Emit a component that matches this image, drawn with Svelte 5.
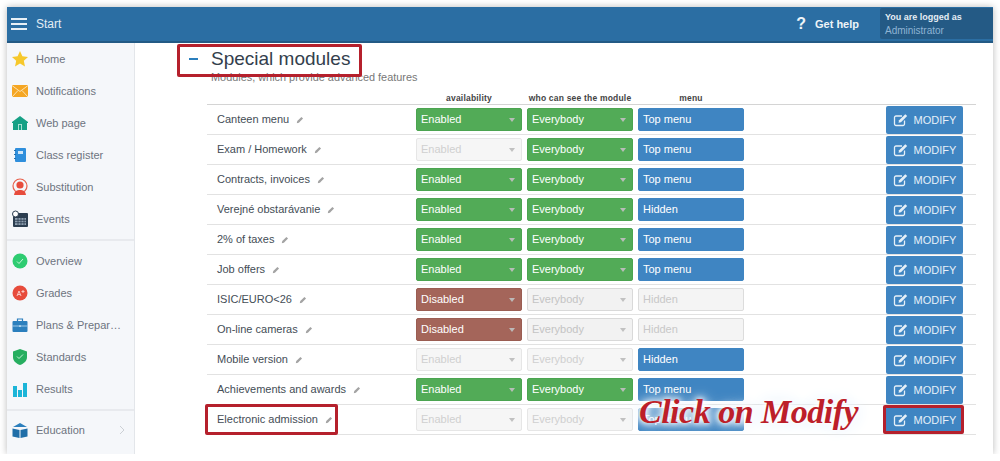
<script>
  const topNav = [
    { label: 'Home', icon: 'star' },
    { label: 'Notifications', icon: 'mail' },
    { label: 'Web page', icon: 'house' },
    { label: 'Class register', icon: 'book' },
    { label: 'Substitution', icon: 'person' },
    { label: 'Events', icon: 'calendar' }
  ];
  const midNav = [
    { label: 'Overview', icon: 'check' },
    { label: 'Grades', icon: 'grade' },
    { label: 'Plans & Prepar…', icon: 'case' },
    { label: 'Standards', icon: 'shield' },
    { label: 'Results', icon: 'bars' }
  ];

  // a: availability, w: who can see, m: menu, mo: menu greyed out
  const rows = [
    { name: 'Canteen menu', a: 'on', w: 'on', m: 'Top menu' },
    { name: 'Exam / Homework', a: 'off', w: 'on', m: 'Top menu' },
    { name: 'Contracts, invoices', a: 'on', w: 'on', m: 'Top menu' },
    { name: 'Verejné obstarávanie', a: 'on', w: 'on', m: 'Hidden' },
    { name: '2% of taxes', a: 'on', w: 'on', m: 'Top menu' },
    { name: 'Job offers', a: 'on', w: 'on', m: 'Top menu' },
    { name: 'ISIC/EURO<26', a: 'dis', w: 'grey', m: 'Hidden', mo: true },
    { name: 'On-line cameras', a: 'dis', w: 'grey', m: 'Hidden', mo: true },
    { name: 'Mobile version', a: 'off', w: 'off', m: 'Hidden' },
    { name: 'Achievements and awards', a: 'on', w: 'on', m: 'Top menu' },
    { name: 'Electronic admission', a: 'off', w: 'off', m: 'Top menu' }
  ];
  const availText = { on: 'Enabled', off: 'Enabled', dis: 'Disabled' };
</script>

{#snippet navIcon(name)}
  <svg class="nav-icon" viewBox="0 0 18 18" aria-hidden="true">
    {#if name === 'star'}
      <path d="M9 1l2.400 5.300 5.600.6-4.200 3.800 1.200 5.700L9 13.500l-5 2.900 1.200-5.700L1 6.900l5.600-.6z" fill="#f6c82c" />
    {:else if name === 'mail'}
      <rect x="1" y="3" width="16" height="12" fill="#f5a623" />
      <path d="M1 3.500l8 6 8-6M1 15l6-6.500M17 15l-6-6.500" fill="none" stroke="#fde3b0" stroke-width="1" />
    {:else if name === 'house'}
      <path d="M9 2l8 6v1h-1v7H2V9H1V8z" fill="#16a085" />
      <rect x="7" y="10" width="4" height="6" fill="#a8e0d2" />
      <rect x="8" y="11" width="2" height="5" fill="#16a085" />
    {:else if name === 'book'}
      <rect x="4" y="2" width="11" height="14" rx="1" fill="#2f8fdc" />
      <rect x="3" y="4" width="2" height="1" fill="#2470ad" /><rect x="3" y="8" width="2" height="1" fill="#2470ad" /><rect x="3" y="12" width="2" height="1" fill="#2470ad" />
      <rect x="7" y="5" width="5" height="3" fill="#cfe6f8" />
    {:else if name === 'person'}
      <circle cx="9" cy="8" r="7" fill="none" stroke="#e8604c" stroke-width="1.200" />
      <circle cx="9" cy="7" r="3.600" fill="#e74c3c" />
      <path d="M3 17c.5-4 3-5 6-5s5.500 1 6 5z" fill="#e74c3c" />
    {:else if name === 'calendar'}
      <rect x="2" y="3" width="15" height="14" rx="1" fill="#2c3e50" />
      <rect x="4" y="8" width="11" height="7" fill="#8fa0b0" />
      <path d="M4 10.300h11M4 12.700h11M7 8v7M10 8v7M13 8v7" stroke="#2c3e50" stroke-width=".8" />
      <circle cx="4.500" cy="4" r="3" fill="#fff" stroke="#2c3e50" />
    {:else if name === 'check'}
      <circle cx="9" cy="9" r="7.500" fill="#2ecc71" />
      <path d="M6 9.500l2 2 4-4.500" fill="none" stroke="#c9f2da" stroke-width="1" />
    {:else if name === 'grade'}
      <circle cx="9" cy="9" r="7.500" fill="#e74c3c" />
      <path d="M6 12l2-5 2 5M7 10.500h2M12 6v3M10.500 7.500h3" fill="none" stroke="#f9c9c3" stroke-width="1" />
    {:else if name === 'case'}
      <path d="M6.500 5V3h5v2" fill="none" stroke="#2b7fbd" stroke-width="1.200" />
      <rect x="1.500" y="5" width="15" height="11" rx="1" fill="#2b7fbd" />
      <path d="M1.500 10h15" stroke="#bcdcf2" stroke-width=".8" />
      <rect x="8" y="9.400" width="2" height="1.400" fill="#bcdcf2" />
    {:else if name === 'shield'}
      <path d="M9 1l7 2.500V9c0 4-3 6.500-7 8-4-1.500-7-4-7-8V3.500z" fill="#27ae60" />
      <path d="M6 8.500l2 2 4-4" fill="none" stroke="#c9f2da" stroke-width="1" />
    {:else if name === 'bars'}
      <rect x="2" y="6" width="4" height="11" fill="#1cb5d8" />
      <rect x="7" y="10" width="4" height="7" fill="#1cb5d8" />
      <rect x="12" y="3" width="4" height="14" fill="#1cb5d8" />
    {:else if name === 'edu'}
      <path d="M9 2l7 4H2z" fill="#2b7fbd" />
      <path d="M1.500 7.500L8.500 9v8L1.500 15.500zM16.500 7.500L9.500 9v8l7-1.500z" fill="#1f6ea8" />
    {/if}
  </svg>
{/snippet}

{#snippet pencil()}
  <svg class="pencil" viewBox="0 0 10 10" aria-hidden="true">
    <path d="M1 9l.6-2.600L6.800 1.200l2 2-5.200 5.200z" fill="#a3a3a3" />
  </svg>
{/snippet}

<div class="window">
  <header class="topbar">
    <button class="burger" type="button" aria-label="Menu"><span></span><span></span><span></span></button>
    <span class="start">Start</span>
    <span class="help"><b class="q">?</b> Get help</span>
    <div class="user">
      <strong>You are logged as</strong>
      <span>Administrator</span>
    </div>
  </header>

  <div class="layout">
    <nav class="sidebar">
      <ul class="group first">
        {#each topNav as item}
          <li>{@render navIcon(item.icon)}<span class="label">{item.label}</span></li>
        {/each}
      </ul>
      <ul class="group mid">
        {#each midNav as item}
          <li>{@render navIcon(item.icon)}<span class="label">{item.label}</span></li>
        {/each}
      </ul>
      <ul class="group last">
        <li>
          {@render navIcon('edu')}<span class="label edu">Education</span>
          <svg class="chev" viewBox="0 0 6 10" aria-hidden="true"><path d="M1 1l4 4-4 4" fill="none" stroke="#ccd0d5" stroke-width="1" /></svg>
        </li>
      </ul>
    </nav>

    <main class="content">
      <h1><span class="minus"></span>Special modules</h1>
      <p class="sub">Modules, which provide advanced features</p>

      <div class="table">
        <div class="head">
          <span class="h-name"></span>
          <span class="h-col">availability</span>
          <span class="h-col">who can see the module</span>
          <span class="h-col">menu</span>
        </div>
        {#each rows as row}
          <div class="row">
            <div class="name">{row.name}{@render pencil()}</div>
            <div class="sel {row.a}">{availText[row.a]}<i class="caret"></i></div>
            <div class="sel {row.w}">Everybody<i class="caret"></i></div>
            <div class="sel menu" class:grey={row.mo}>{row.m}</div>
            <button class="modify" type="button">
              <svg viewBox="0 0 16 14" aria-hidden="true">
                <path d="M11.500 7.500V11a1.500 1.500 0 0 1-1.500 1.500H3A1.500 1.500 0 0 1 1.500 11V4.500A1.500 1.500 0 0 1 3 3h6" fill="none" stroke="#e6f0f8" stroke-width="1.300" />
                <path d="M5.500 9.800l.6-2.500 6.200-6.100 1.900 1.900-6.200 6.100z" fill="#e6f0f8" />
              </svg>
              MODIFY
            </button>
          </div>
        {/each}
      </div>
    </main>
  </div>

  <div class="mark mark-title"></div>
  <div class="mark mark-row"></div>
  <div class="mark mark-btn"></div>
  <div class="callout">Click on Modify</div>
</div>

<style>
  :global(body) {
    margin: 0;
    background: #fff;
  }

  .window {
    position: relative;
    height: 447px;
    margin: 7px 7px 0;
    overflow: hidden;
    box-shadow: 0 0 7px rgba(0, 0, 0, 0.28);
    font-family: "Liberation Sans", Arial, sans-serif;
    background: #fff;
  }

  .topbar {
    display: flex;
    align-items: center;
    height: 34px;
    padding-left: 4px;
    border-bottom: 2px solid #235a85;
    background: #2b6ea3;
    color: #fff;
  }

  .burger {
    display: flex;
    flex-direction: column;
    gap: 3px;
    width: 16px;
    margin-right: 9px;
    padding: 0;
    border: 0;
    background: none;
  }
  .burger span {
    height: 2px;
    background: #e8f0f6;
  }

  .start {
    font-size: 12px;
    color: #e4edf4;
  }

  .help {
    margin-left: auto;
    display: flex;
    align-items: center;
    gap: 9px;
    font-size: 11px;
    font-weight: 700;
    color: #eef4f8;
  }
  .q {
    font-size: 16px;
  }

  .user {
    display: flex;
    flex-direction: column;
    justify-content: center;
    gap: 3px;
    align-self: flex-start;
    width: 113px;
    height: 31px;
    margin: 1px 0 0 21px;
    padding-left: 5px;
    box-sizing: border-box;
    border-radius: 2px 0 0 2px;
    background: #245a85;
    font-size: 9px;
  }
  .user strong {
    color: #e4edf4;
  }
  .user span {
    font-size: 10px;
    color: #8fb4d4;
  }

  .layout {
    display: grid;
    grid-template-columns: 128px 1fr;
    height: 411px;
  }

  .sidebar {
    border-right: 1px solid #e3e6ea;
    background: #f5f7fa;
    font-size: 11px;
    color: #6d7480;
  }

  .group {
    margin: 0;
    padding: 0;
    list-style: none;
  }
  .group li {
    display: flex;
    align-items: center;
    height: 32px;
    padding-left: 4px;
  }
  .first {
    padding: 0 0 4px;
    border-bottom: 2px solid #e8eaee;
  }
  .mid {
    padding: 4px 0 4px;
    border-bottom: 2px solid #e8eaee;
  }
  .last {
    padding-top: 3px;
  }

  .nav-icon {
    flex: none;
    width: 18px;
    height: 18px;
    margin-right: 7px;
  }
  .label {
    white-space: nowrap;
  }
  .edu {
    width: 66px;
  }
  .chev {
    width: 6px;
    height: 10px;
    margin-left: 17px;
  }

  .content {
    padding: 6px 17px 0 76px;
    min-width: 0;
  }

  h1 {
    display: flex;
    align-items: center;
    height: 20px;
    margin: 0 0 0 -22px;
    font-size: 19px;
    font-weight: 400;
    line-height: 20px;
    color: #33404d;
  }

  .minus {
    width: 9px;
    height: 2px;
    margin-right: 13px;
    background: #2b7fbd;
  }

  .sub {
    margin: 1px 0 0;
    font-size: 10.900px;
    color: #777;
    line-height: 14px;
  }

  .table {
    margin: 7px 0 0 -4px;
  }

  .head {
    display: flex;
    height: 13px;
    align-items: center;
    font-size: 8.500px;
    font-weight: 700;
    color: #444;
    letter-spacing: 0.2px;
    text-align: center;
  }
  .h-name {
    width: 209px;
  }
  .h-col {
    width: 106px;
    margin-right: 5px;
    white-space: nowrap;
  }

  .row {
    display: flex;
    align-items: center;
    gap: 5px;
    height: 29px;
    border-top: 1px solid #e2e2e2;
  }
  .head + .row {
    border-top-color: #d4d4d4;
  }
  .row:last-child {
    border-bottom: 1px solid #e2e2e2;
  }

  .name {
    width: 194px;
    padding: 0 0 2px 10px;
    font-size: 11px;
    color: #444d56;
    white-space: nowrap;
  }
  .pencil {
    width: 8px;
    height: 8px;
    margin-left: 7px;
    vertical-align: -1px;
  }

  .sel {
    position: relative;
    flex: none;
    width: 106px;
    height: 23px;
    box-sizing: border-box;
    padding-left: 4px;
    border: 1px solid transparent;
    border-radius: 2px;
    font-size: 11px;
    line-height: 21px;
    color: #fff;
  }
  .on {
    background: #52ab57;
    border-color: #4ba450;
  }
  .dis {
    background: #a4655a;
    border-color: #9a5d52;
  }
  .off {
    background: #f6f6f6;
    border-color: #e6e6e6;
    color: #d0d0d0;
  }
  .grey {
    background: #f2f2f2;
    border-color: #d9d9d9;
    color: #c4c4c4;
  }
  .menu {
    background: #3f85c2;
    border-color: #3f85c2;
  }
  .menu.grey {
    background: #f4f4f4;
    border-color: #dcdcdc;
    color: #c8c8c8;
  }

  .caret {
    position: absolute;
    right: 6px;
    top: 9px;
    width: 0;
    height: 0;
    border: 3.500px solid transparent;
    border-bottom: 0;
    border-top: 4px solid rgba(190, 190, 190, 0.95);
  }

  .modify {
    display: flex;
    align-items: center;
    justify-content: center;
    gap: 5px;
    flex: none;
    width: 77px;
    height: 28px;
    margin-left: 137px;
    padding: 0;
    border: 0;
    border-radius: 2px;
    background: #3f85c2;
    color: #e6f0f8;
    font: 11px "Liberation Sans", Arial, sans-serif;
  }
  .modify svg {
    width: 16px;
    height: 14px;
  }

  .mark {
    position: absolute;
    box-sizing: border-box;
    border: 3px solid #b5202c;
    border-radius: 2px;
  }
  .mark-title {
    left: 170px;
    top: 37px;
    width: 185px;
    height: 33px;
  }
  .mark-row {
    left: 198px;
    top: 397px;
    width: 133px;
    height: 31px;
  }
  .mark-btn {
    left: 876px;
    top: 398px;
    width: 81px;
    height: 29px;
  }

  .callout {
    position: absolute;
    left: 632px;
    top: 385px;
    font-family: "Liberation Serif", serif;
    font-style: italic;
    font-weight: 700;
    font-size: 34px;
    line-height: 40px;
    white-space: nowrap;
    color: #bd1f2a;
    letter-spacing: -0.5px;
    text-shadow: 0 0 5px #fff, 0 0 8px #fff, 0 0 12px #fff, 0 0 16px #cfe6f8;
  }
</style>
